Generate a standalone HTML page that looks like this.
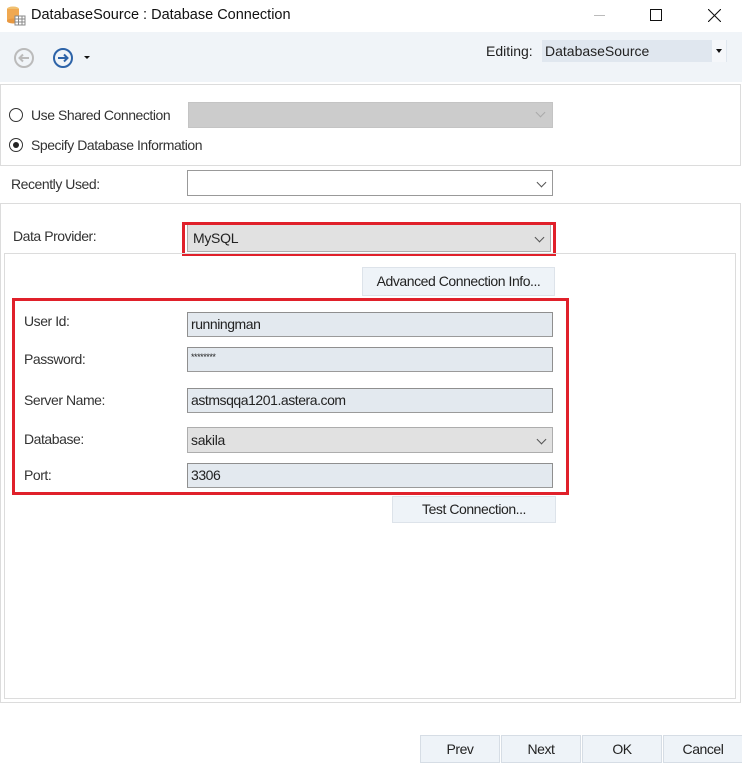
<!DOCTYPE html>
<html><head><meta charset="utf-8"><style>
*{margin:0;padding:0;box-sizing:border-box}
body{width:742px;height:762px;background:#fff;font-family:"Liberation Sans",sans-serif;font-size:13px;color:#222;position:relative;overflow:hidden}
.a{position:absolute}
.lbl{position:absolute;font-size:14px;color:#333;letter-spacing:-0.45px}
.tb{position:absolute;background:#e3e9ef;border:1px solid #8f8f8f;border-bottom-color:#9a9a9a;font-size:14px;padding:4px 3px;line-height:15px;color:#222;letter-spacing:-0.45px}
.cb{position:absolute;background:#e1e1e1;border:1px solid #adadad;font-size:14px;padding:5px 4px;line-height:14px;letter-spacing:-0.3px}
.chev{position:absolute;right:7px;top:8px;width:7px;height:7px;border-right:1.3px solid #555;border-bottom:1.3px solid #555;transform:rotate(45deg)}
.btn{position:absolute;background:#eef3f8;border:1px solid #dde3ea;text-align:center;font-size:14px;color:#222;letter-spacing:-0.45px}
.red{position:absolute;border:3px solid #e0202a}
</style></head><body>
<svg class="a" style="left:5px;top:5px" width="22" height="22" viewBox="0 0 22 22">
<ellipse cx="8" cy="4" rx="6" ry="2.5" fill="#f0c070"/>
<rect x="2" y="4" width="12" height="12" fill="#f0a850"/>
<ellipse cx="8" cy="16" rx="6" ry="2.5" fill="#e89840"/>
<rect x="10" y="11" width="10" height="9" fill="#fff" stroke="#888"/>
<line x1="10" y1="14" x2="20" y2="14" stroke="#888"/><line x1="10" y1="17" x2="20" y2="17" stroke="#888"/>
<line x1="13.5" y1="11" x2="13.5" y2="20" stroke="#888"/><line x1="17" y1="11" x2="17" y2="20" stroke="#888"/>
</svg>
<div class="a" style="left:31px;top:7px;font-size:14.5px;color:#111">DatabaseSource : Database Connection</div>
<div class="a" style="left:594px;top:15px;width:11px;height:1px;background:#bbb"></div>
<div class="a" style="left:650px;top:9px;width:12px;height:12px;border:1px solid #111"></div>
<svg class="a" style="left:708px;top:9px" width="13" height="13"><path d="M0 0L13 13M13 0L0 13" stroke="#111" stroke-width="1.1"/></svg>
<div class="a" style="left:0;top:32px;width:742px;height:50px;background:#f0f4f8"></div>
<svg class="a" style="left:13px;top:47px" width="22" height="22"><circle cx="11" cy="11" r="9" fill="none" stroke="#bbb" stroke-width="2"/><path d="M16 11H7M10 7.5L6.5 11L10 14.5" fill="none" stroke="#bbb" stroke-width="2"/></svg>
<svg class="a" style="left:52px;top:47px" width="22" height="22"><circle cx="11" cy="11" r="9" fill="none" stroke="#2d63a8" stroke-width="2"/><path d="M6 11H15M12 7.5L15.5 11L12 14.5" fill="none" stroke="#2d63a8" stroke-width="2"/></svg>
<div class="a" style="left:84px;top:56px;border-left:3px solid transparent;border-right:3px solid transparent;border-top:3px solid #111"></div>
<div class="a" style="left:486px;top:43px;font-size:14px;color:#222">Editing:</div>
<div class="a" style="left:542px;top:40px;width:185px;height:22px;background:#e0e7ef"></div>
<div class="a" style="left:545px;top:43px;font-size:14px;color:#222">DatabaseSource</div>
<div class="a" style="left:712px;top:40px;width:14px;height:22px;background:#f5f7fa"></div>
<div class="a" style="left:716px;top:49px;border-left:3px solid transparent;border-right:3px solid transparent;border-top:4px solid #111"></div>
<div class="a" style="left:0;top:84px;width:741px;height:82px;border:1px solid #dcdcdc"></div>
<div class="a" style="left:9px;top:108px;width:14px;height:14px;border:1px solid #333;border-radius:50%;background:#fff"></div>
<div class="lbl" style="left:31px;top:107px">Use Shared Connection</div>
<div class="a" style="left:188px;top:102px;width:365px;height:26px;background:#cccccc;border:1px solid #c4c4c4"></div>
<div class="a" style="left:537px;top:109px;width:7px;height:7px;border-right:1px solid #aaa;border-bottom:1px solid #aaa;transform:rotate(45deg)"></div>
<div class="a" style="left:9px;top:138px;width:14px;height:14px;border:1px solid #333;border-radius:50%;background:#fff"></div>
<div class="a" style="left:13px;top:142px;width:6px;height:6px;border-radius:50%;background:#222"></div>
<div class="lbl" style="left:31px;top:137px">Specify Database Information</div>
<div class="lbl" style="left:11px;top:176px">Recently Used:</div>
<div class="a" style="left:187px;top:170px;width:366px;height:26px;border:1px solid #999;background:#fff"><div class="chev"></div></div>
<div class="a" style="left:0;top:203px;width:741px;height:500px;border:1px solid #dcdcdc"></div>
<div class="lbl" style="left:13px;top:228px">Data Provider:</div>
<div class="cb" style="left:187px;top:224px;width:364px;height:28px;font-size:14px;padding:6px 5px">MySQL<div class="chev" style="top:9px"></div></div>
<div class="red" style="left:182px;top:222px;width:374px;height:34px"></div>
<div class="a" style="left:4px;top:253px;width:732px;height:446px;border:1px solid #dcdcdc"></div>
<div class="btn" style="left:362px;top:267px;width:193px;height:29px;line-height:27px">Advanced Connection Info...</div>
<div class="lbl" style="left:24px;top:313px">User Id:</div>
<div class="tb" style="left:187px;top:312px;width:366px;height:25px">runningman</div>
<div class="lbl" style="left:24px;top:351px">Password:</div>
<div class="tb" style="left:187px;top:347px;width:366px;height:25px;font-size:9px;line-height:10px">********</div>
<div class="lbl" style="left:24px;top:392px">Server Name:</div>
<div class="tb" style="left:187px;top:388px;width:366px;height:25px">astmsqqa1201.astera.com</div>
<div class="lbl" style="left:24px;top:431px">Database:</div>
<div class="cb" style="left:187px;top:427px;width:366px;height:26px;padding:5px 3px">sakila<div class="chev"></div></div>
<div class="lbl" style="left:24px;top:467px">Port:</div>
<div class="tb" style="left:187px;top:463px;width:366px;height:25px">3306</div>
<div class="red" style="left:12px;top:298px;width:557px;height:197px"></div>
<div class="btn" style="left:392px;top:496px;width:164px;height:27px;line-height:25px">Test Connection...</div>
<div class="btn" style="left:420px;top:735px;width:80px;height:28px;line-height:27px;border-color:#d6dde5">Prev</div>
<div class="btn" style="left:501px;top:735px;width:80px;height:28px;line-height:27px;border-color:#d6dde5">Next</div>
<div class="btn" style="left:582px;top:735px;width:80px;height:28px;line-height:27px;border-color:#d6dde5">OK</div>
<div class="btn" style="left:663px;top:735px;width:80px;height:28px;line-height:27px;border-color:#d6dde5">Cancel</div>
</body></html>
